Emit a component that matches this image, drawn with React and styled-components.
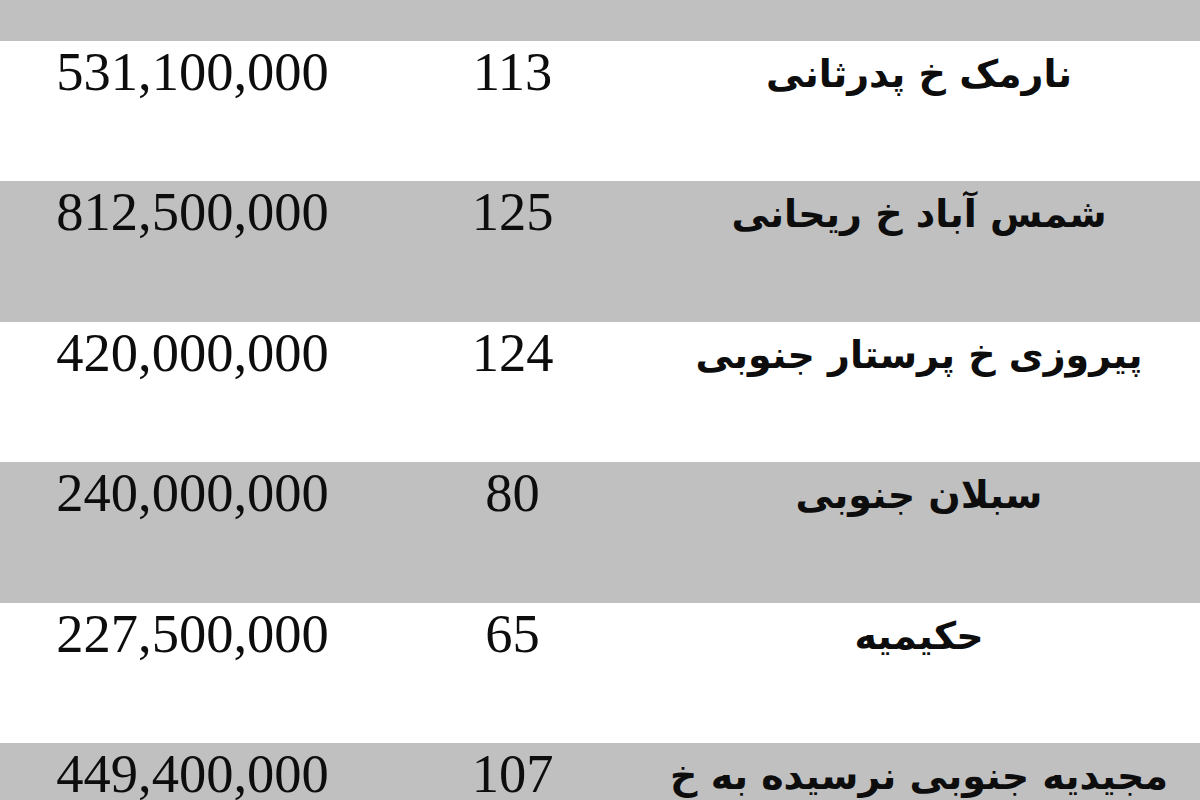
import React from "react";
import styled, { createGlobalStyle } from "styled-components";

const Global = createGlobalStyle`
  html, body { margin: 0; padding: 0; background: #ffffff; overflow: hidden; }
  #root { width: 1200px; height: 800px; overflow: hidden; }
`;

const Table = styled.div`
  width: 1200px;
  display: flex;
  flex-direction: column;
  direction: rtl;
`;

const HeaderBand = styled.div`
  height: 41px;
  background: #c0c0c0;
`;

const Row = styled.div`
  display: grid;
  grid-template-columns: 560px 255px 385px;
  height: 140.4px;
  background: ${(p) => (p.$shaded ? "#c0c0c0" : "#ffffff")};
  color: #0d0d0d;
`;

const NameCell = styled.div`
  text-align: center;
  font-family: "DejaVu Sans", sans-serif;
  font-weight: bold;
  font-size: 38px;
  line-height: 60px;
  padding-top: 3px;
  padding-right: 2px;
  white-space: nowrap;
`;

const NumCell = styled.div`
  text-align: center;
  font-family: "Liberation Serif", serif;
  font-size: 54.5px;
  line-height: 60px;
  padding-top: 1px;
  direction: ltr;
  white-space: nowrap;
`;

const rows = [
  { name: "نارمک خ پدرثانی", area: "113", price: "531,100,000" },
  { name: "شمس آباد خ ریحانی", area: "125", price: "812,500,000" },
  { name: "پیروزی خ پرستار جنوبی", area: "124", price: "420,000,000" },
  { name: "سبلان جنوبی", area: "80", price: "240,000,000" },
  { name: "حکیمیه", area: "65", price: "227,500,000" },
  { name: "مجیدیه جنوبی نرسیده به خ", area: "107", price: "449,400,000" },
];

export default function App() {
  return (
    <>
      <Global />
      <Table>
        <HeaderBand />
        {rows.map((r, i) => (
          <Row key={i} $shaded={i % 2 === 1}>
            <NameCell>{r.name}</NameCell>
            <NumCell>{r.area}</NumCell>
            <NumCell>{r.price}</NumCell>
          </Row>
        ))}
      </Table>
    </>
  );
}
